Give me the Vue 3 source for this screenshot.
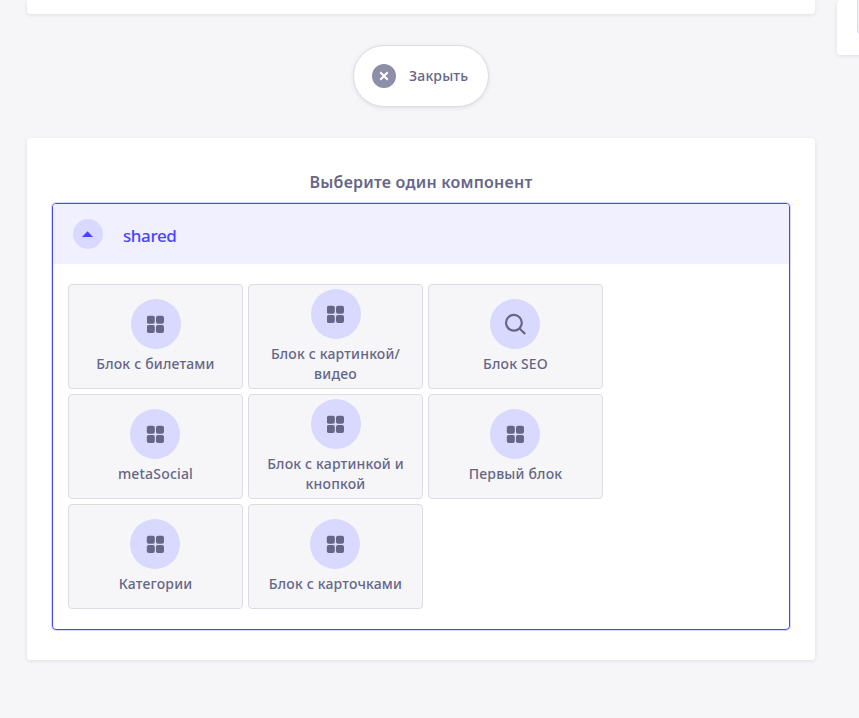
<script setup>
const components = [
  { name: 'Блок с билетами', lines: ['Блок с билетами'], icon: 'grid' },
  { name: 'Блок с картинкой/видео', lines: ['Блок с картинкой/', 'видео'], icon: 'grid' },
  { name: 'Блок SEO', lines: ['Блок SEO'], icon: 'search', snap: true },
  { name: 'metaSocial', lines: ['metaSocial'], icon: 'grid', snap: true },
  { name: 'Блок с картинкой и кнопкой', lines: ['Блок с картинкой и', 'кнопкой'], icon: 'grid' },
  { name: 'Первый блок', lines: ['Первый блок'], icon: 'grid', snap: true },
  { name: 'Категории', lines: ['Категории'], icon: 'grid', snap: true },
  { name: 'Блок с карточками', lines: ['Блок с карточками'], icon: 'grid', snap: true },
]
</script>

<template>
  <div class="page">
    <main class="column">
      <section class="panel previous"></section>
      <button class="close" type="button">
        <svg class="close-icon" width="24" height="24" viewBox="0 0 24 24">
          <circle cx="12" cy="12" r="12" fill="#8e8ea9" />
          <path d="M8.3 8.3l7.4 7.4M15.7 8.3l-7.4 7.4" stroke="#fff" stroke-width="2" />
        </svg>
        <span class="close-text">Закрыть</span>
      </button>
      <section class="panel picker">
        <h2 class="title">Выберите один компонент</h2>
        <div class="group">
          <header class="group-head">
            <span class="toggle">
              <svg width="12" height="6" viewBox="0 0 12 6"><path d="M0 6L5.5 0.2L11 6z" fill="#4945ff" /></svg>
            </span>
            <span class="group-name">shared</span>
          </header>
          <div class="cards">
            <button v-for="item in components" :key="item.name" class="card" type="button">
              <span class="disc" :class="{ snap: item.snap }">
                <svg v-if="item.icon === 'grid'" width="18" height="18" :viewBox="item.snap ? '-0.5 -0.5 18 18' : '0.5 -0.5 18 18'" fill="#666687">
                  <rect x="0.3" y="0.3" width="8" height="8" rx="2" />
                  <rect x="9.5" y="0.3" width="8" height="8" rx="2" />
                  <rect x="0.3" y="9.5" width="8" height="8" rx="2" />
                  <rect x="9.5" y="9.5" width="8" height="8" rx="2" />
                </svg>
                <svg v-else width="22" height="22" viewBox="0 0 22 22" fill="none" stroke="#666687" stroke-width="2.2">
                  <circle cx="9.9" cy="9.8" r="7.9" />
                  <path d="M15.5 15.5l5.7 5.5" />
                </svg>
              </span>
              <span class="label"><span v-for="line in item.lines" :key="line" class="line">{{ line }}</span></span>
            </button>
          </div>
        </div>
      </section>
    </main>
    <aside class="side panel"><div class="side-box"></div></aside>
  </div>
</template>

<style>
body {
  background: #f6f6f9;
  overflow: hidden;
}
</style>

<style scoped>
.page {
  box-sizing: border-box;
  height: 718px;
  padding-left: 27px;
  display: flex;
  align-items: flex-start;
  gap: 22px;
  overflow: hidden;
  background: #f6f6f9;
  color: #666687;
  font-family: "Noto Sans", "Open Sans", sans-serif;
}
.column {
  flex: none;
  width: 788px;
  display: flex;
  flex-direction: column;
  align-items: center;
}
.panel {
  box-sizing: border-box;
  background: #fff;
  border-radius: 4px;
  box-shadow: 0 1px 4px rgba(33, 33, 52, 0.1);
}
.previous {
  width: 100%;
  height: 14px;
  border-radius: 0 0 4px 4px;
}
button {
  box-sizing: border-box;
  margin: 0;
  color: inherit;
  font-family: inherit;
}
.close {
  width: 136px;
  height: 62px;
  margin-top: 31px;
  padding: 0 0 0 18px;
  display: flex;
  align-items: center;
  gap: 13px;
  border: 1px solid #dcdce4;
  border-radius: 31px;
  background: #fff;
  box-shadow: 0 1px 4px rgba(33, 33, 52, 0.1);
}
.close-icon {
  flex: none;
}
.close-text {
  font-size: 14px;
  line-height: 20px;
  font-weight: 500;
  letter-spacing: 0.16px;
  white-space: nowrap;
}
.picker {
  width: 100%;
  height: 522px;
  margin-top: 31px;
  padding: 32px 25px 0;
}
.title {
  margin: 0;
  text-align: center;
  font-size: 16px;
  line-height: 24px;
  font-weight: 600;
  letter-spacing: 0.23px;
  white-space: nowrap;
}
.group {
  box-sizing: border-box;
  height: 427px;
  margin-top: 9px;
  border: 1px solid #4945ff;
  border-radius: 4px;
  box-shadow: 0 0 0 1px rgba(73, 69, 255, 0.22);
  overflow: hidden;
}
.group-head {
  height: 60px;
  box-sizing: border-box;
  padding-left: 20px;
  display: flex;
  align-items: center;
  gap: 20px;
  background: #f0f0ff;
  color: #4945ff;
}
.toggle {
  width: 30px;
  height: 30px;
  display: flex;
  align-items: center;
  justify-content: center;
  border-radius: 50%;
  background: #d9d8ff;
}
.group-name {
  padding-top: 4px;
  font-size: 17px;
  line-height: 24px;
  font-weight: 500;
  letter-spacing: -0.4px;
}
.cards {
  padding: 20px 15px;
  display: grid;
  grid-template-columns: repeat(3, 175px);
  grid-auto-rows: 105px;
  gap: 5px;
}
.card {
  padding: 0;
  display: flex;
  flex-direction: column;
  align-items: center;
  justify-content: center;
  gap: 5px;
  border: 1px solid #dcdce4;
  border-radius: 4px;
  background: #f6f6f9;
}
.disc {
  width: 50px;
  height: 50px;
  display: flex;
  align-items: center;
  justify-content: center;
  border-radius: 50%;
  background: #d9d8ff;
}
.snap {
  margin-right: 1px;
}
.label {
  font-size: 14px;
  line-height: 20px;
  font-weight: 500;
  letter-spacing: 0.18px;
  white-space: nowrap;
}
.line {
  display: block;
}
.side {
  flex: none;
  width: 200px;
  height: 55px;
  padding-left: 20px;
}
.side-box {
  box-sizing: border-box;
  height: 34px;
  border: 1px solid #d9d8ff;
  border-top: 0;
  border-radius: 0 0 4px 4px;
  background: #f0f0ff;
}
</style>
